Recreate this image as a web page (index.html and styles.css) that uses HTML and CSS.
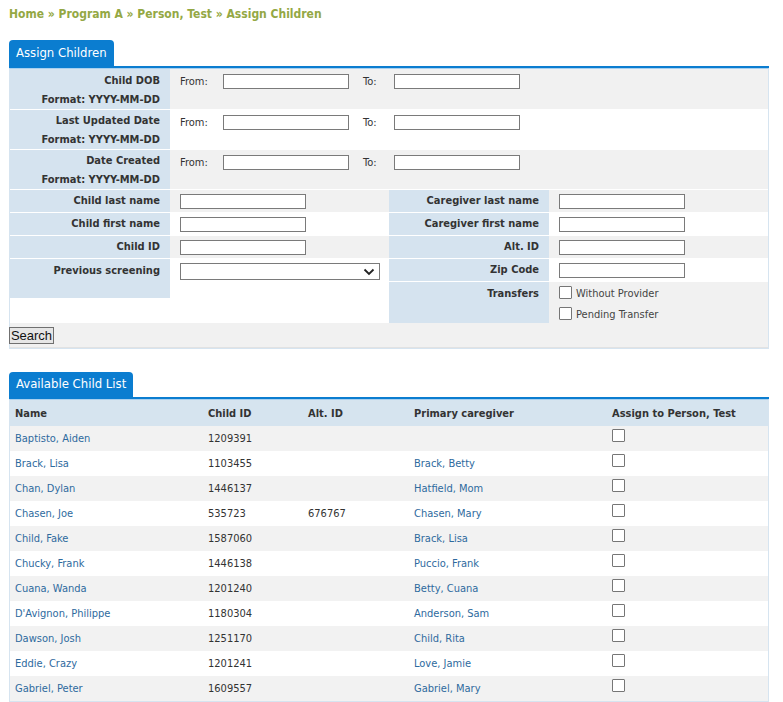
FILE: index.html
```html
<!DOCTYPE html>
<html>
<head>
<meta charset="utf-8">
<link rel="stylesheet" href="styles.css">
</head>
<body>
<div class="crumb">Home » Program A » Person, Test » Assign Children</div>

<div class="section">
  <div class="tabbar"><span class="tab">Assign Children</span></div>
  <div class="panel">
    <table class="dates">
      <tr class="grey first">
        <th>Child DOB<br>Format: YYYY-MM-DD</th>
        <td><div class="range"><span class="lbl">From:</span><span class="inp"></span><span class="lbl to">To:</span><span class="inp"></span></div></td>
      </tr>
      <tr>
        <th>Last Updated Date<br>Format: YYYY-MM-DD</th>
        <td><div class="range"><span class="lbl">From:</span><span class="inp"></span><span class="lbl to">To:</span><span class="inp"></span></div></td>
      </tr>
      <tr class="grey">
        <th>Date Created<br>Format: YYYY-MM-DD</th>
        <td><div class="range"><span class="lbl">From:</span><span class="inp"></span><span class="lbl to">To:</span><span class="inp"></span></div></td>
      </tr>
    </table>
    <div class="halves">
      <table class="half">
        <tr class="grey"><th>Child last name</th><td><span class="inp"></span></td></tr>
        <tr><th>Child first name</th><td><span class="inp"></span></td></tr>
        <tr class="grey"><th>Child ID</th><td><span class="inp"></span></td></tr>
        <tr class="tall"><th>Previous screening</th><td><span class="sel"><svg width="12" height="8" viewBox="0 0 12 8"><path d="M1.5 1.5 L6 6 L10.5 1.5" fill="none" stroke="#222" stroke-width="1.8"/></svg></span></td></tr>
      </table>
      <table class="half">
        <tr class="grey"><th>Caregiver last name</th><td><span class="inp"></span></td></tr>
        <tr><th>Caregiver first name</th><td><span class="inp"></span></td></tr>
        <tr class="grey"><th>Alt. ID</th><td><span class="inp"></span></td></tr>
        <tr><th>Zip Code</th><td><span class="inp"></span></td></tr>
        <tr class="grey transfers"><th>Transfers</th><td><div class="chk"><span class="box"></span><span class="ctext">Without Provider</span></div><div class="chk last"><span class="box"></span><span class="ctext">Pending Transfer</span></div></td></tr>
      </table>
    </div>
    <div class="searchrow"><button class="btn">Search</button></div>
  </div>
</div>

<div class="section second">
  <div class="tabbar"><span class="tab">Available Child List</span></div>
  <div class="panel">
    <table class="list">
      <tr class="head"><th class="c1">Name</th><th class="c2">Child ID</th><th class="c3">Alt. ID</th><th class="c4">Primary caregiver</th><th class="c5">Assign to Person, Test</th></tr>
      <tr><td><a>Baptisto, Aiden</a></td><td>1209391</td><td></td><td></td><td class="ck"><span class="box"></span></td></tr>
      <tr><td><a>Brack, Lisa</a></td><td>1103455</td><td></td><td><a>Brack, Betty</a></td><td class="ck"><span class="box"></span></td></tr>
      <tr><td><a>Chan, Dylan</a></td><td>1446137</td><td></td><td><a>Hatfield, Mom</a></td><td class="ck"><span class="box"></span></td></tr>
      <tr><td><a>Chasen, Joe</a></td><td>535723</td><td>676767</td><td><a>Chasen, Mary</a></td><td class="ck"><span class="box"></span></td></tr>
      <tr><td><a>Child, Fake</a></td><td>1587060</td><td></td><td><a>Brack, Lisa</a></td><td class="ck"><span class="box"></span></td></tr>
      <tr><td><a>Chucky, Frank</a></td><td>1446138</td><td></td><td><a>Puccio, Frank</a></td><td class="ck"><span class="box"></span></td></tr>
      <tr><td><a>Cuana, Wanda</a></td><td>1201240</td><td></td><td><a>Betty, Cuana</a></td><td class="ck"><span class="box"></span></td></tr>
      <tr><td><a>D'Avignon, Philippe</a></td><td>1180304</td><td></td><td><a>Anderson, Sam</a></td><td class="ck"><span class="box"></span></td></tr>
      <tr><td><a>Dawson, Josh</a></td><td>1251170</td><td></td><td><a>Child, Rita</a></td><td class="ck"><span class="box"></span></td></tr>
      <tr><td><a>Eddie, Crazy</a></td><td>1201241</td><td></td><td><a>Love, Jamie</a></td><td class="ck"><span class="box"></span></td></tr>
      <tr><td><a>Gabriel, Peter</a></td><td>1609557</td><td></td><td><a>Gabriel, Mary</a></td><td class="ck"><span class="box"></span></td></tr>
    </table>
  </div>
</div>
</body>
</html>
```

FILE: styles.css
```css
body {
  margin: 0;
  font-family: "DejaVu Sans Condensed", "DejaVu Sans", sans-serif;
  font-size: 11px;
  color: #333;
  background: #fff;
}
.crumb {
  padding: 7px 9px 0;
  height: 19px;
  font-size: 12px;
  font-weight: bold;
  color: #94a844;
}
.section {
  margin: 14px 14px 0 9px;
}
.section.second {
  margin-top: 23px;
}
.tabbar {
  border-bottom: 2px solid #0b7dd0;
  display: flex;
}
.tab {
  background: #0b7dd0;
  color: #fff;
  font-size: 13px;
  height: 26px;
  line-height: 25px;
  padding: 0 7px;
  border-radius: 4px 4px 0 0;
}
.second .tab {
  height: 25px;
  line-height: 24px;
}
.panel {
  border: 1px solid #d6e4f0;
  border-top: 1px solid #a9d0ef;
}
table {
  border-collapse: collapse;
  width: 100%;
}
th, td {
  padding: 0;
}
.grey td { background: #f1f1f1; }
.dates th {
  width: 150px;
  background: #d5e3ef;
  text-align: right;
  padding: 1px 10px 0 0;
  line-height: 19px;
  border-bottom: 1px solid #fff;
  vertical-align: top;
}
.dates tr.first th { padding-top: 2px; }
.dates td {
  vertical-align: top;
  padding: 5px 0 0 10px;
  border-bottom: 1px solid #fff;
}
.range {
  display: flex;
  align-items: center;
}
.dates .lbl { width: 43px; }
.dates .lbl.to { width: 31px; margin-left: 14px; }
.inp {
  display: inline-block;
  width: 124px;
  height: 13px;
  border: 1px solid #7a7a7a;
  background: #fff;
  vertical-align: middle;
}
.halves {
  display: flex;
  align-items: flex-start;
}
.half {
  width: 50%;
}
.half th {
  width: 150px;
  background: #d5e3ef;
  text-align: right;
  padding: 0 10px 0 0;
  height: 22px;
  line-height: 14px;
  border-bottom: 1px solid #fff;
  vertical-align: middle;
}
.half td {
  padding: 0 0 0 10px;
  height: 22px;
  border-bottom: 1px solid #fff;
  vertical-align: middle;
}
.half tr.tall th {
  height: 34px;
  padding-top: 5px;
  vertical-align: top;
  border-bottom: 0;
}
.half tr.tall td {
  height: 35px;
  padding-top: 4px;
  vertical-align: top;
  border-bottom: 0;
}
.sel {
  display: flex;
  justify-content: flex-end;
  align-items: center;
  box-sizing: border-box;
  width: 200px;
  height: 17px;
  border: 1px solid #7a7a7a;
  background: #fff;
  padding-right: 4px;
}
.half tr.transfers th {
  height: 36px;
  padding-top: 5px;
  vertical-align: top;
  border-bottom: 0;
}
.half tr.transfers td {
  height: 37px;
  padding-top: 4px;
  vertical-align: top;
  border-bottom: 0;
}
.chk {
  display: flex;
  align-items: flex-start;
  height: 21px;
  color: #444;
}
.chk.last { height: 16px; }
.ctext {
  line-height: 14px;
  padding-top: 1px;
}
.box {
  display: inline-block;
  width: 11px;
  height: 11px;
  border: 1px solid #767676;
  background: #fff;
  margin-right: 4px;
  border-radius: 1px;
  flex: none;
}
.searchrow {
  background: #f1f1f1;
  height: 24px;
  border-bottom: 1px solid #e2e2e2;
  display: flex;
  align-items: center;
}
.btn {
  font-family: "Liberation Sans", Arial, sans-serif;
  font-size: 13px;
  height: 17px;
  width: 45px;
  padding: 0;
  line-height: 14px;
  border: 1px solid #707070;
  background: #e6e6e6;
  color: #111;
  margin-left: -1px;
  margin-top: 1px;
}
.list th {
  background: #d6e4ef;
  height: 26px;
  text-align: left;
  padding-left: 5px;
  color: #333;
}
.list td {
  height: 25px;
  padding-left: 5px;
  vertical-align: middle;
}
.list tr:nth-child(even) td { background: #f2f2f2; }
.list .c1 { width: 188px; }
.list .c2 { width: 95px; }
.list .c3 { width: 101px; }
.list .c4 { width: 193px; }
.list td.ck {
  vertical-align: top;
  padding-top: 3px;
  height: 22px;
}
.list td.ck .box { display: block; }
a {
  color: #2e6a9e;
  text-decoration: none;
}
```
